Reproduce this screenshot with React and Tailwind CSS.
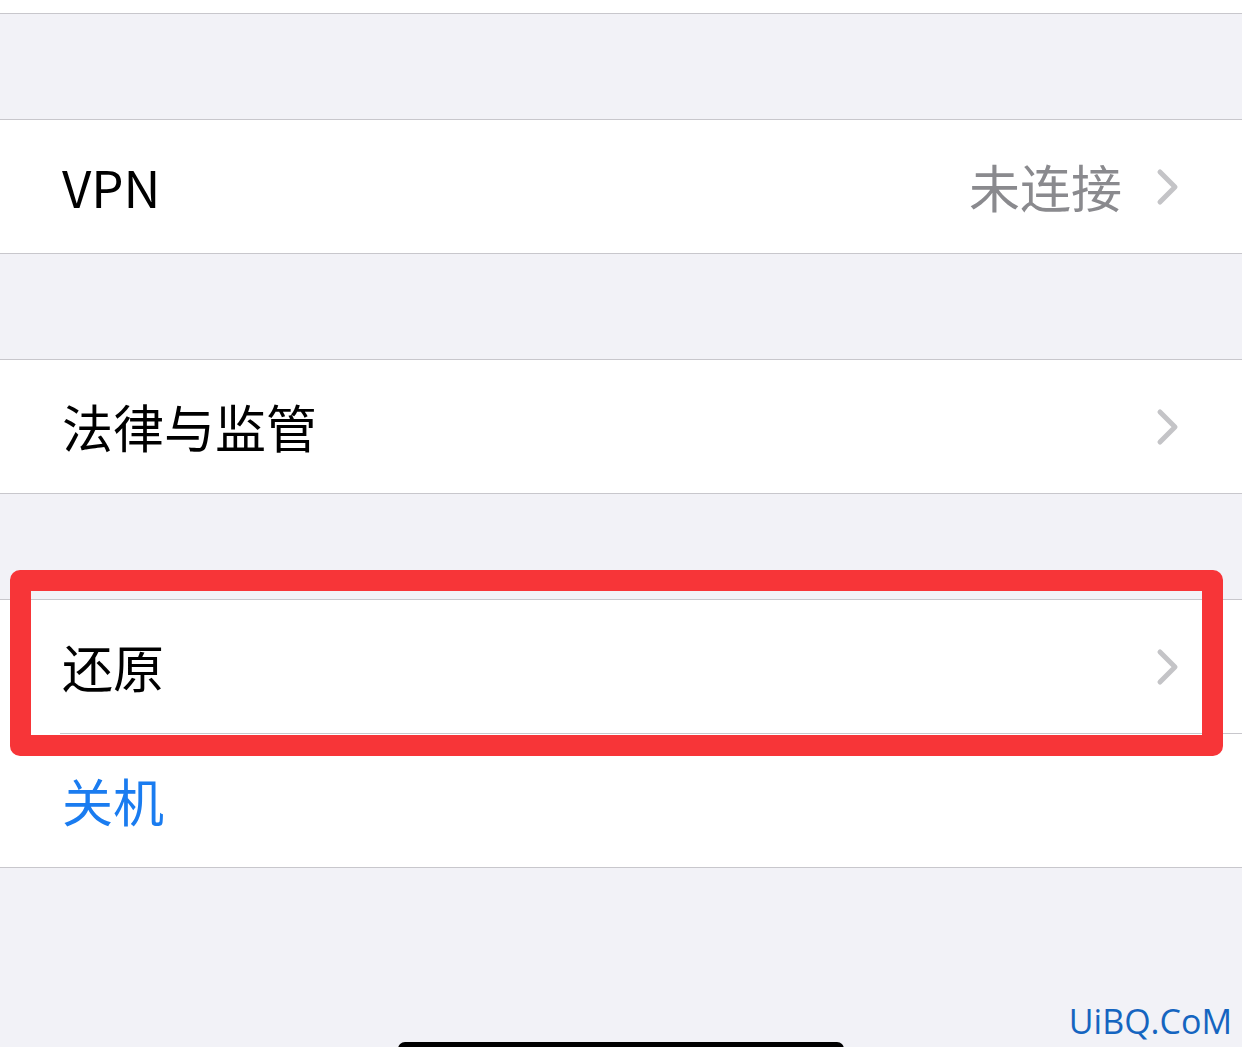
import React from "react";

const Chevron = () => (
  <svg width="24" height="38" viewBox="0 0 24 38" className="shrink-0">
    <path d="M4 4 L19 19 L4 34" fill="none" stroke="#c4c4c7" strokeWidth="5" strokeLinecap="round" strokeLinejoin="round" />
  </svg>
);

const Row = ({ label, value, blue, chevron = true }) => (
  <div className="h-[133px] flex items-center pl-[62px] pr-[62px] bg-white">
    <span className={`flex-1 text-[51px] leading-none ${blue ? "text-[#1a7cf0]" : "text-black"}`}>{label}</span>
    {value && <span className="text-[51px] leading-none text-[#8a8a8e] mr-[34px]">{value}</span>}
    {chevron && <Chevron />}
  </div>
);

const App = () => {
  return (
    <div
      className="relative w-[1242px] h-[1047px] overflow-hidden bg-[#f2f2f7]"
      style={{ fontFamily: '"Noto Sans CJK SC", "Noto Sans", sans-serif' }}
    >
      <div className="h-[14px] bg-white border-b border-[#c8c7cc]" />
      <div className="h-[105px]" />
      <div className="border-y border-[#c8c7cc]">
        <Row label="VPN" value="未连接" />
      </div>
      <div className="h-[105px]" />
      <div className="border-y border-[#c8c7cc]">
        <Row label="法律与监管" />
      </div>
      <div className="h-[105px]" />
      <div className="border-y border-[#c8c7cc] bg-white">
        <Row label="还原" />
        <div className="ml-[60px] h-px bg-[#c8c7cc]" />
        <Row label="关机" blue chevron={false} />
      </div>

      <div className="absolute left-[10px] top-[570px] w-[1213px] h-[186px] border-[21px] border-[#f73538] rounded-[10px]" />

      <div className="absolute right-[10px] top-[1004px] text-[34px] leading-none text-[#1565c0]" style={{ fontFamily: '"Open Sans", sans-serif' }}>
        UiBQ.CoM
      </div>
      <div className="absolute left-[398px] top-[1042px] w-[446px] h-[14px] bg-black rounded-full" />
    </div>
  );
};

export default App;
